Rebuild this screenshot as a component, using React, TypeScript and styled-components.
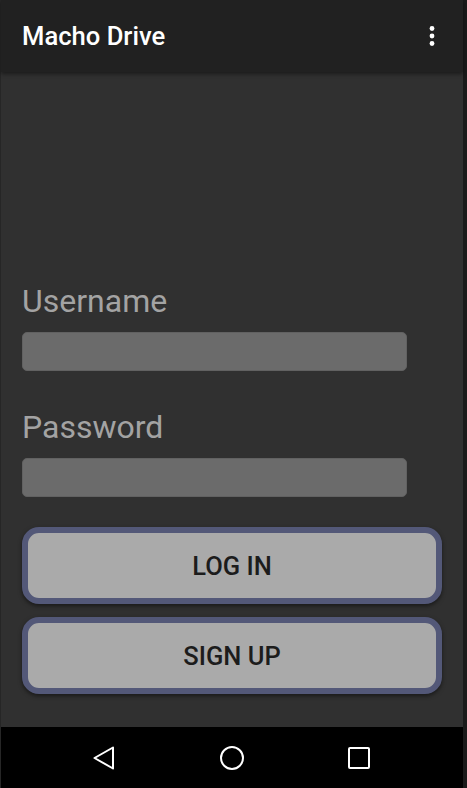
import React from "react";
import styled, { createGlobalStyle } from "styled-components";

const Global = createGlobalStyle`
  html, body { margin: 0; padding: 0; background: #303030; }
  body { font-family: Roboto, "Noto Sans", sans-serif; }
  * { box-sizing: border-box; }
`;

const Frame = styled.div`
  width: 467px;
  height: 788px;
  display: flex;
  background: #1a1a1a;
`;

const Screen = styled.div`
  width: 463px;
  height: 788px;
  display: flex;
  flex-direction: column;
  border-left: 1px solid #262626;
`;

const AppBar = styled.header`
  height: 72px;
  flex: none;
  background: #212121;
  display: flex;
  align-items: center;
  justify-content: space-between;
  padding: 0 21px 0 21px;
  box-shadow: 0 2px 4px rgba(0, 0, 0, 0.45);
  position: relative;
  z-index: 1;
`;

const Title = styled.h1`
  margin: 0;
  font-family: Roboto, sans-serif;
  font-weight: 500;
  font-size: 25.6px;
  color: #ffffff;
`;

const MenuButton = styled.button`
  border: none;
  background: none;
  padding: 0;
  width: 20px;
  height: 24px;
  display: flex;
  align-items: center;
  justify-content: center;
`;

const Content = styled.main`
  flex: 1;
  background: #303030;
  display: flex;
  flex-direction: column;
  justify-content: flex-end;
  padding: 0 21px 33px 21px;
`;

const Label = styled.label`
  font-family: Roboto, sans-serif;
  font-size: 32px;
  color: #a3a3a3;
  line-height: 34px;
  margin-bottom: 14px;
`;

const Input = styled.input<{ $mb: number }>`
  width: 385px;
  height: 39px;
  border: 1px solid #616161;
  border-radius: 5px;
  background: #6b6b6b;
  margin-bottom: ${(p) => p.$mb}px;
  outline: none;
`;

const Button = styled.button<{ $mt: number }>`
  width: 420px;
  height: 77px;
  margin-top: ${(p) => p.$mt}px;
  border: 6px solid #535878;
  border-radius: 17px;
  background: #aaaaaa;
  font-family: Roboto, sans-serif;
  font-weight: 500;
  font-size: 25.5px;
  color: #1c1c1c;
  box-shadow: 0 2px 4px rgba(0, 0, 0, 0.5);
  display: flex;
  align-items: center;
  justify-content: center;
  padding: 1px 0 0 0;
`;

const NavBar = styled.nav`
  height: 61px;
  flex: none;
  background: #000000;
  display: grid;
  grid-template-columns: 1fr 1fr 1fr;
  padding: 0 40px 0 40px;
  align-items: center;
`;

const NavSlot = styled.div`
  display: flex;
  justify-content: center;
  align-items: center;
`;

export default function App() {
  return (
    <>
      <Global />
      <Frame>
        <Screen>
          <AppBar>
            <Title>Macho Drive</Title>
            <MenuButton aria-label="More">
              <svg width="6" height="22" viewBox="0 0 6 22">
                <circle cx="3" cy="3.5" r="2.4" fill="#fff" />
                <circle cx="3" cy="11" r="2.4" fill="#fff" />
                <circle cx="3" cy="18.5" r="2.4" fill="#fff" />
              </svg>
            </MenuButton>
          </AppBar>
          <Content>
            <Label>Username</Label>
            <Input $mb={39} />
            <Label>Password</Label>
            <Input $mb={0} />
            <Button $mt={30}>LOG IN</Button>
            <Button $mt={13}>SIGN UP</Button>
          </Content>
          <NavBar>
            <NavSlot>
              <svg width="26" height="26" viewBox="0 0 26 26">
                <path d="M21 2.5 L2.5 13 L21 23.5 Z" fill="none" stroke="#fff" strokeWidth="2" strokeLinejoin="round" />
              </svg>
            </NavSlot>
            <NavSlot>
              <svg width="26" height="26" viewBox="0 0 26 26">
                <circle cx="13" cy="13" r="11" fill="none" stroke="#fff" strokeWidth="2" />
              </svg>
            </NavSlot>
            <NavSlot>
              <svg width="24" height="24" viewBox="0 0 24 24">
                <rect x="2" y="2" width="20" height="20" rx="1" fill="none" stroke="#fff" strokeWidth="2" />
              </svg>
            </NavSlot>
          </NavBar>
        </Screen>
      </Frame>
    </>
  );
}
